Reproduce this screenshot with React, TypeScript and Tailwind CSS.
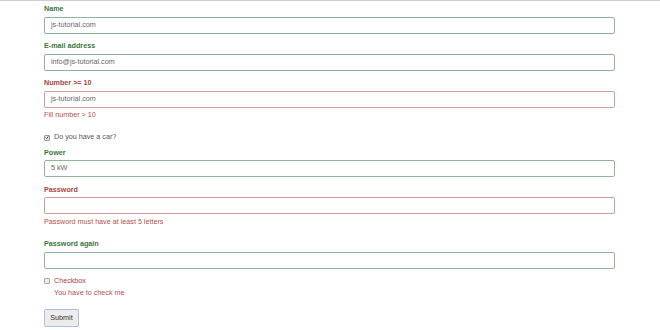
import React from 'react';

const green = 'text-[#3c763d]';
const red = 'text-[#a94442]';

const Field: React.FC<{
  label: string;
  value?: string;
  ok: boolean;
  help?: string;
}> = ({ label, value, ok, help }) => (
  <div className="flex flex-col mb-[7.5px]">
    <label className={`block text-[7.2px] font-bold leading-[10px] mb-[2.5px] ${ok ? green : red}`}>{label}</label>
    <div
      className={`h-[17px] w-[571px] rounded-[2px] border bg-white px-[6px] flex items-center text-[7.2px] text-[#666] ${
        ok ? 'border-[#94b595]' : 'border-[#d49c9b]'
      }`}
    >
      {value}
    </div>
    {help && <p className="mt-[2.5px] mb-[5px] text-[7.2px] leading-[10px] text-[#b0514f]">{help}</p>}
  </div>
);

export default function App() {
  return (
    <div
      className="w-[660px] h-[330px] bg-white border-t border-[#cfcfcf] pt-[3px] pl-[44px] overflow-hidden flex flex-col items-start"
      style={{ fontFamily: '"Liberation Sans", Arial, sans-serif' }}
    >
      <Field label="Name" value="js-tutorial.com" ok />
      <Field label="E-mail address" value="info@js-tutorial.com" ok />
      <Field label="Number >= 10" value="js-tutorial.com" ok={false} help="Fill number > 10" />

      <div className="flex items-center gap-[4px] h-[10px] mb-[5px] text-[7.2px] text-[#555]">
        <span className="w-[6px] h-[6px] rounded-[1px] border border-[#9a9a9a] bg-[#e6e6e6] flex items-center justify-center">
          <svg viewBox="0 0 10 10" className="w-[5px] h-[5px]">
            <path d="M1.8 5.2 L4.2 7.6 L8.4 2.4" fill="none" stroke="#333" strokeWidth="2.2" />
          </svg>
        </span>
        <span>Do you have a car?</span>
      </div>

      <Field label="Power" value="5 kW" ok />
      <Field label="Password" ok={false} help="Password must have at least 5 letters" />
      <Field label="Password again" ok />

      <div className={`flex items-center gap-[4px] h-[10px] text-[7.2px] ${red}`}>
        <span className="w-[6px] h-[6px] rounded-[1px] border border-[#a8a8a8] bg-[#ededed]" />
        <span>Checkbox</span>
      </div>
      <p className="mt-[2px] pl-[10px] text-[7.2px] leading-[10px] text-[#b0514f]">You have to check me</p>

      <button className="mt-[11px] h-[18px] w-[35px] rounded-[2px] border border-[#a9c0e2] bg-[#ececec] text-[7.2px] text-[#333]">
        Submit
      </button>
    </div>
  );
}
